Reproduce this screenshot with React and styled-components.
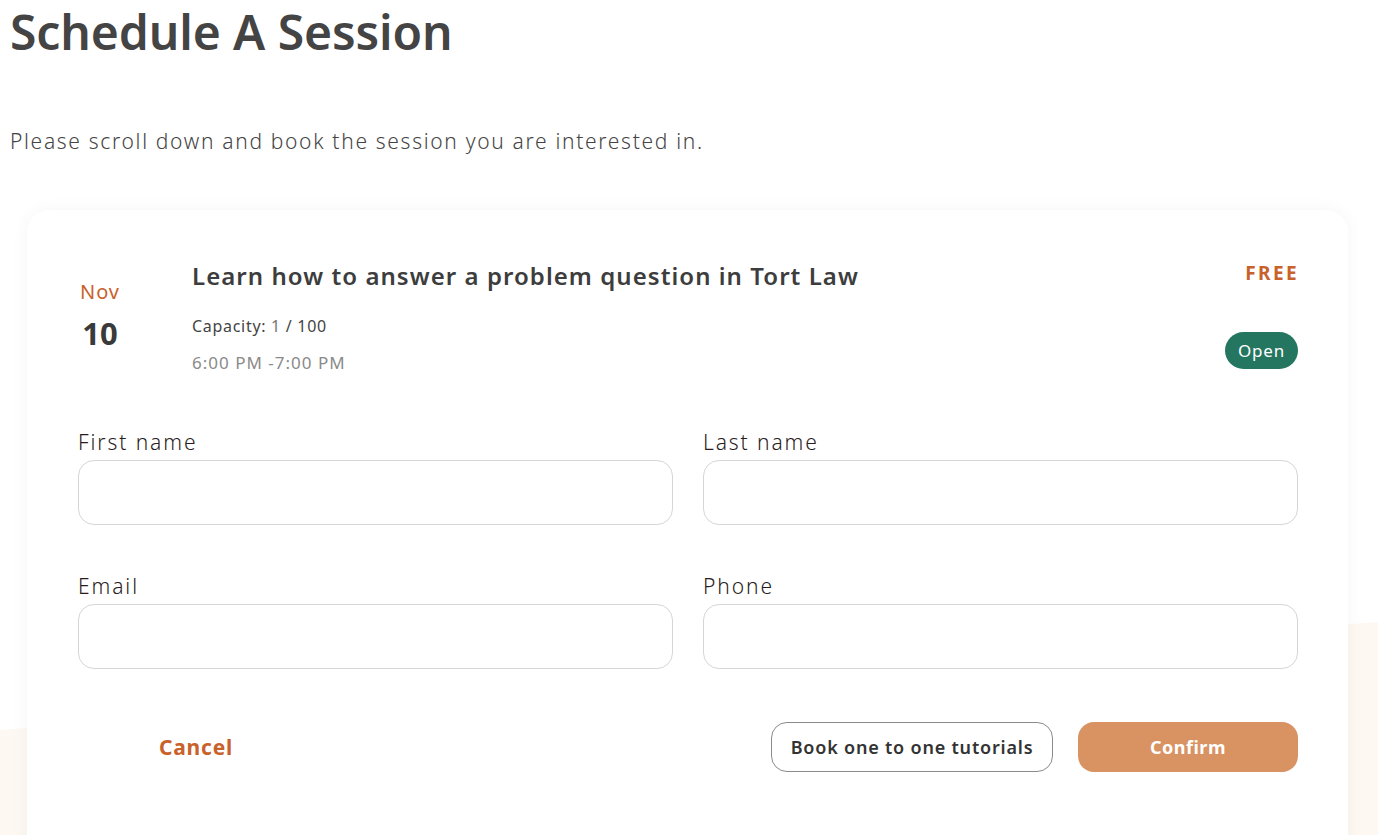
import React, { useState } from "react";
import styled, { createGlobalStyle } from "styled-components";

const GlobalStyle = createGlobalStyle`
  * { box-sizing: border-box; }
  html, body {
    margin: 0;
    padding: 0;
    background: #ffffff;
    font-family: "Noto Sans", "Open Sans", sans-serif;
    color: #444;
  }
`;

const Page = styled.div`
  position: relative;
  min-height: 100vh;
  overflow: hidden;
  padding: 0 30px 0 10px;
`;

// 카드 뒤의 크림색 배경 장식
const Backdrop = styled.div`
  position: absolute;
  inset: 0;
  background: #fdf8f2;
  clip-path: polygon(0 730px, 100% 622px, 100% 100%, 0 100%);
  z-index: 0;
`;

const Content = styled.div`
  position: relative;
  z-index: 1;
`;

const Title = styled.h1`
  margin: 0;
  padding-top: 4px;
  font-size: 48px;
  font-weight: 600;
  line-height: 56px;
  color: #444;
  letter-spacing: -0.1px;
`;

const Subtitle = styled.p`
  margin: 67px 0 0;
  font-size: 21px;
  font-weight: 300;
  line-height: 28px;
  letter-spacing: 1.68px;
  color: #444;
`;

const Card = styled.section`
  margin: 55px 0 0 17px;
  background: #fff;
  border-radius: 22px;
  box-shadow: 0 0 18px rgba(0, 0, 0, 0.045);
  padding: 50px 50px 90px 51px;
`;

const Session = styled.div`
  display: grid;
  grid-template-columns: 114px 1fr auto;
`;

const DateBox = styled.div`
  display: flex;
  flex-direction: column;
  align-items: center;
  padding-top: 20px;
  width: 44px;
`;

const Month = styled.span`
  font-size: 20px;
  font-weight: 400;
  color: #c9612b;
  line-height: 24px;
  letter-spacing: 1px;
`;

const Day = styled.span`
  margin-top: 11px;
  font-size: 31px;
  font-weight: 700;
  color: #3a3a3a;
  line-height: 36px;
`;

const Info = styled.div`
  display: flex;
  flex-direction: column;
`;

const SessionTitle = styled.h2`
  margin: 0;
  font-size: 24px;
  font-weight: 600;
  line-height: 32px;
  color: #3d3d3d;
  letter-spacing: 1.05px;
`;

const Meta = styled.div`
  margin-top: ${(p) => p.$top}px;
  font-size: ${(p) => p.$size}px;
  line-height: 20px;
  letter-spacing: ${(p) => p.$spacing}px;
  color: ${(p) => p.$color};
`;

const Highlight = styled.span`
  color: #777;
`;

const Side = styled.div`
  display: flex;
  flex-direction: column;
  align-items: flex-end;
`;

const Price = styled.span`
  font-size: 19px;
  font-weight: 700;
  color: #c9612b;
  line-height: 24px;
  letter-spacing: 2.4px;
  margin-top: 1px;
  margin-right: -1px;
`;

const Status = styled.span`
  margin-top: 47px;
  display: inline-flex;
  align-items: center;
  justify-content: center;
  height: 37px;
  padding: 0 13px;
  border-radius: 19px;
  background: #257660;
  color: #fff;
  font-size: 17px;
  letter-spacing: 0.8px;
  line-height: 1;
`;

const Form = styled.form`
  margin-top: 56px;
  display: grid;
  grid-template-columns: 1fr 1fr;
  column-gap: 30px;
  row-gap: 48px;
`;

const Field = styled.label`
  display: flex;
  flex-direction: column;
  gap: 5px;
`;

const LabelText = styled.span`
  font-size: 21px;
  font-weight: 300;
  line-height: 26px;
  letter-spacing: 1.9px;
  color: #2a1c1c;
`;

const Input = styled.input`
  height: 65px;
  border: 1px solid #d6d6d6;
  border-radius: 16px;
  padding: 0 18px;
  font-size: 18px;
  font-family: inherit;
  outline: none;
  background: #fff;

  &:focus {
    border-color: #d99262;
  }
`;

const Actions = styled.div`
  margin-top: 53px;
  display: flex;
  align-items: center;
  gap: 25px;
`;

const Button = styled.button`
  height: 50px;
  border-radius: 16px;
  font-family: inherit;
  cursor: pointer;
  border: ${(p) => (p.$variant === "outline" ? "1px solid #8a8a8a" : "none")};
  background: ${(p) => (p.$variant === "primary" ? "#d99262" : "#fff")};
  color: ${(p) =>
    p.$variant === "primary" ? "#fff" : p.$variant === "link" ? "#c9612b" : "#333"};
  width: ${(p) => p.$width}px;
  font-size: ${(p) => (p.$variant === "link" ? 21 : 18)}px;
  font-weight: ${(p) => (p.$variant === "outline" ? 600 : 700)};
  letter-spacing: ${(p) => (p.$variant === "primary" ? 0.5 : 0.8)}px;
  margin-right: ${(p) => (p.$variant === "link" ? "auto" : "0")};
`;

const fields = [
  { id: "first", label: "First name" },
  { id: "last", label: "Last name" },
  { id: "email", label: "Email" },
  { id: "phone", label: "Phone" },
];

const App = () => {
  const [values, setValues] = useState({});

  const update = (id) => (e) => setValues({ ...values, [id]: e.target.value });

  return (
    <>
      <GlobalStyle />
      <Page>
        <Backdrop />
        <Content>
          <Title>Schedule A Session</Title>
          <Subtitle>Please scroll down and book the session you are interested in.</Subtitle>

          <Card>
            {/* 세션 정보 */}
            <Session>
              <DateBox>
                <Month>Nov</Month>
                <Day>10</Day>
              </DateBox>
              <Info>
                <SessionTitle>Learn how to answer a problem question in Tort Law</SessionTitle>
                <Meta $top={24} $size={16} $spacing={0.7} $color="#444">
                  Capacity: <Highlight>1</Highlight> / 100
                </Meta>
                <Meta $top={17} $size={17} $spacing={1} $color="#8a8a8a">
                  6:00 PM -7:00 PM
                </Meta>
              </Info>
              <Side>
                <Price>FREE</Price>
                <Status>Open</Status>
              </Side>
            </Session>

            {/* 입력 폼 */}
            <Form onSubmit={(e) => e.preventDefault()}>
              {fields.map((f) => (
                <Field key={f.id}>
                  <LabelText>{f.label}</LabelText>
                  <Input value={values[f.id] || ""} onChange={update(f.id)} />
                </Field>
              ))}
            </Form>

            <Actions>
              <Button type="button" $variant="link" $width={236}>Cancel</Button>
              <Button type="button" $variant="outline" $width={282}>Book one to one tutorials</Button>
              <Button type="button" $variant="primary" $width={220}>Confirm</Button>
            </Actions>
          </Card>
        </Content>
      </Page>
    </>
  );
};

export default App;
